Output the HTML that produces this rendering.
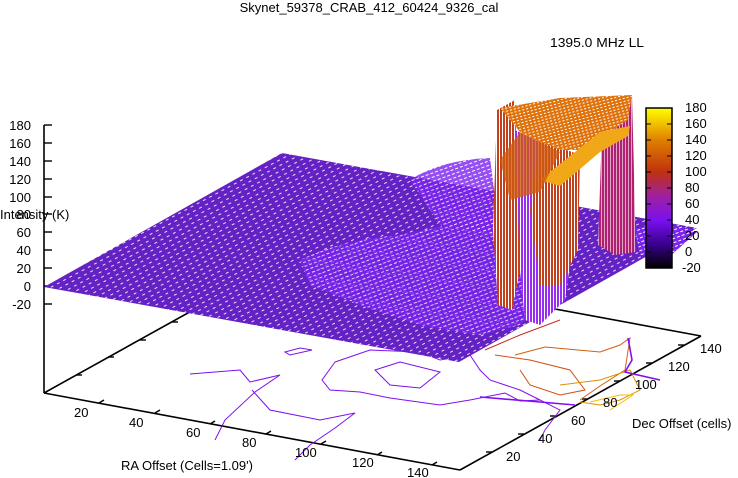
<!DOCTYPE html>
<html><head><meta charset="utf-8"><style>
html,body{margin:0;padding:0;background:#fff;width:738px;height:478px;overflow:hidden}
svg{display:block}
text{font-family:"Liberation Sans",sans-serif;font-size:13px;fill:#000}
</style></head><body>
<svg width="738" height="478" viewBox="0 0 738 478" xmlns="http://www.w3.org/2000/svg">
<defs>
<pattern id="mesh" width="7" height="5" patternUnits="userSpaceOnUse" patternTransform="rotate(-28)">
<rect width="7" height="5" fill="#6422c4"/>
<rect x="1" y="2" width="3" height="1" fill="#ffffff" opacity="0.85"/>
</pattern>
<pattern id="mesh2" width="5" height="4" patternUnits="userSpaceOnUse" patternTransform="rotate(-20)">
<rect width="5" height="4" fill="#7a22f0"/>
<rect x="0" y="2" width="3" height="1" fill="#ffffff"/>
</pattern>
<pattern id="wall" width="3" height="6" patternUnits="userSpaceOnUse">
<rect width="3" height="6" fill="#c2401c"/>
<rect x="1" y="0" width="1" height="6" fill="#fff"/>
</pattern>
<pattern id="wallP" width="3" height="6" patternUnits="userSpaceOnUse">
<rect width="3" height="6" fill="#b02070"/>
<rect x="1" y="0" width="1" height="6" fill="#fff" opacity="0.6"/>
</pattern>
<pattern id="wallV" width="3" height="6" patternUnits="userSpaceOnUse">
<rect width="3" height="6" fill="#9a2ef0"/>
<rect x="1" y="0" width="1" height="6" fill="#fff"/>
</pattern>
<pattern id="top" width="4" height="3" patternUnits="userSpaceOnUse" patternTransform="rotate(-15)">
<rect width="4" height="3" fill="#e0720c"/>
<rect x="0" y="1" width="2" height="1" fill="#fff"/>
</pattern>
<linearGradient id="cb" x1="0" y1="1" x2="0" y2="0">
<stop offset="0" stop-color="#000000"/>
<stop offset="0.15" stop-color="#3a0090"/>
<stop offset="0.3" stop-color="#7a10f0"/>
<stop offset="0.45" stop-color="#a020a0"/>
<stop offset="0.6" stop-color="#c03010"/>
<stop offset="0.8" stop-color="#e08000"/>
<stop offset="1" stop-color="#ffff00"/>
</linearGradient>
<linearGradient id="lg" x1="0" x2="1"><stop offset="0" stop-color="#7010f0"/><stop offset="0.5" stop-color="#c03010"/><stop offset="1" stop-color="#f0c000"/></linearGradient>
</defs>

<text x="369" y="12" text-anchor="middle" font-size="12">Skynet_59378_CRAB_412_60424_9326_cal</text>
<text x="644" y="47" text-anchor="end" font-size="12" textLength="94" lengthAdjust="spacingAndGlyphs">1395.0 MHz LL</text>
<line x1="653" y1="43" x2="694" y2="43" stroke="url(#lg)" stroke-width="1"/>

<g stroke="#000" stroke-width="1.6" fill="none">
<line x1="44" y1="125" x2="44" y2="393"/>
<line x1="44" y1="393" x2="460" y2="470"/>
<line x1="460" y1="470" x2="701" y2="336"/>
<line x1="701" y1="336" x2="285" y2="259"/>
<line x1="44" y1="393" x2="285" y2="259"/>
</g>
<g stroke="#000" stroke-width="1.4">
<line x1="44" y1="125" x2="52" y2="125"/><line x1="44" y1="143" x2="52" y2="143"/><line x1="44" y1="161" x2="52" y2="161"/><line x1="44" y1="179" x2="52" y2="179"/><line x1="44" y1="197" x2="52" y2="197"/><line x1="44" y1="214" x2="52" y2="214"/><line x1="44" y1="232" x2="52" y2="232"/><line x1="44" y1="250" x2="52" y2="250"/><line x1="44" y1="268" x2="52" y2="268"/><line x1="44" y1="286" x2="52" y2="286"/><line x1="44" y1="304" x2="52" y2="304"/>
<line x1="99" y1="403" x2="104" y2="400"/><line x1="155" y1="413" x2="160" y2="410"/><line x1="210" y1="424" x2="215" y2="421"/><line x1="266" y1="434" x2="271" y2="431"/><line x1="321" y1="444" x2="326" y2="441"/><line x1="377" y1="455" x2="382" y2="452"/><line x1="432" y1="465" x2="437" y2="462"/>
<line x1="492" y1="452" x2="486" y2="452"/><line x1="524" y1="434" x2="518" y2="434"/><line x1="556" y1="416" x2="550" y2="416"/><line x1="588" y1="399" x2="582" y2="399"/><line x1="620" y1="381" x2="614" y2="381"/><line x1="652" y1="363" x2="646" y2="363"/><line x1="684" y1="345" x2="678" y2="345"/>
<line x1="76" y1="375" x2="82" y2="375"/><line x1="108" y1="357" x2="114" y2="357"/><line x1="140" y1="340" x2="146" y2="340"/><line x1="172" y1="322" x2="178" y2="322"/>
</g>

<g fill="none" stroke-width="1">
<path d="M285 352 L300 348 L312 350 L290 355Z" stroke="#7a10f0"/>
<path d="M190 374 L240 370 L250 382 L280 375 L255 392 L225 420 L215 440" stroke="#7a10f0"/>
<path d="M252 390 L270 410 L320 420 L355 413 L335 428 L310 445 L295 460" stroke="#7a10f0"/>
<path d="M335 362 L370 350 L420 352 L440 360 L470 355 L480 370 L490 380 L520 390 L540 400 L520 401 L505 393 L470 400 L440 405 L390 398 L360 392 L330 390 L322 380Z" stroke="#8010f0"/>
<path d="M375 370 L400 362 L440 372 L420 388 L390 385Z" stroke="#7a10f0"/>
<path d="M536 398 L560 410 L545 430 L540 440" stroke="#8a20e0"/>
<path d="M485 350 L520 335 L560 320" stroke="#c03020"/>
<path d="M495 355 L530 360 L570 370 L585 390 L560 395 L530 385 L520 370" stroke="#d05010"/>
<path d="M515 355 L545 347 L600 352 L620 345 L630 338 L625 370 L600 386 L580 400" stroke="#d06010"/>
<path d="M560 385 L600 380 L630 370 L640 390 L620 400 L600 405 L580 402" stroke="#e09000"/>
<path d="M590 402 L620 395 L633 395 L610 410" stroke="#f0c000"/>
<path d="M628 338 L632 360 L625 372 L660 380" stroke="#8010f0" stroke-width="1.6"/>
<path d="M480 397 L540 402 L575 405" stroke="#8010f0" stroke-width="1.6"/>
</g>

<polygon points="44,287 282,153 697,228 459,362" fill="url(#mesh)"/>
<path d="M300 260 Q340 240 400 235 Q450 225 500 215 L540 260 L545 300 L520 325 L480 335 L420 325 L360 305 L310 285Z" fill="url(#mesh2)" opacity="0.75"/>
<path d="M410 180 Q440 160 490 158 L500 235 L440 225Z" fill="url(#mesh2)" opacity="0.8"/>
<polygon points="493,230 497,110 515,100 520,270 512,310 498,305" fill="url(#wall)"/>
<polygon points="520,270 515,130 575,160 572,250 565,300 540,325 525,320" fill="url(#wallV)"/>
<polygon points="530,210 540,140 580,155 578,250 560,285 540,285" fill="url(#wall)"/>
<polygon points="598,245 602,130 625,118 632,95 636,252 615,255" fill="url(#wallP)"/>
<polygon points="500,108 560,98 632,95 628,120 605,135 582,150 560,150 540,142 520,132" fill="url(#top)"/>
<polygon points="540,180 600,132 630,126 628,136 600,152 560,186" fill="#f0a818"/>
<polygon points="500,160 520,132 560,152 540,192 510,200" fill="#d05a10" opacity="0.8"/>
<polygon points="635,228 680,226 697,232 668,258 640,255" fill="url(#mesh2)"/>

<rect x="646" y="108" width="26" height="160" fill="url(#cb)" stroke="#000" stroke-width="1.5"/>
<g stroke="#000" stroke-width="1">
<line x1="646" y1="124" x2="651" y2="124"/><line x1="667" y1="124" x2="672" y2="124"/>
<line x1="646" y1="140" x2="651" y2="140"/><line x1="667" y1="140" x2="672" y2="140"/>
<line x1="646" y1="156" x2="651" y2="156"/><line x1="667" y1="156" x2="672" y2="156"/>
<line x1="646" y1="172" x2="651" y2="172"/><line x1="667" y1="172" x2="672" y2="172"/>
<line x1="646" y1="188" x2="651" y2="188"/><line x1="667" y1="188" x2="672" y2="188"/>
<line x1="646" y1="204" x2="651" y2="204"/><line x1="667" y1="204" x2="672" y2="204"/>
<line x1="646" y1="220" x2="651" y2="220"/><line x1="667" y1="220" x2="672" y2="220"/>
<line x1="646" y1="236" x2="651" y2="236"/><line x1="667" y1="236" x2="672" y2="236"/>
<line x1="646" y1="252" x2="651" y2="252"/><line x1="667" y1="252" x2="672" y2="252"/>
</g>
<g font-size="12.5">
<text x="685" y="112">180</text><text x="685" y="128">160</text><text x="685" y="144">140</text><text x="685" y="160">120</text><text x="685" y="176">100</text><text x="685" y="192">80</text><text x="685" y="208">60</text><text x="685" y="224">40</text><text x="685" y="240">20</text><text x="685" y="256">0</text><text x="682" y="272">-20</text>
</g>

<g text-anchor="end" font-size="12.5">
<text x="31" y="130">180</text><text x="31" y="148">160</text><text x="31" y="166">140</text><text x="31" y="184">120</text><text x="31" y="202">100</text><text x="31" y="219">80</text><text x="31" y="237">60</text><text x="31" y="255">40</text><text x="31" y="273">20</text><text x="31" y="291">0</text><text x="31" y="309">-20</text>
</g>
<text x="0" y="219" font-size="12.5">Intensity (K)</text>

<g font-size="12.5">
<text x="74" y="417">20</text><text x="129" y="427">40</text><text x="186" y="437">60</text><text x="242" y="447">80</text><text x="295" y="457">100</text><text x="352" y="467">120</text><text x="407" y="477">140</text>
<text x="121" y="470">RA Offset (Cells=1.09')</text>
<text x="506" y="461">20</text><text x="538" y="443">40</text><text x="571" y="425">60</text><text x="603" y="407">80</text><text x="635" y="389">100</text><text x="668" y="371">120</text><text x="700" y="353">140</text>
<text x="632" y="428">Dec Offset (cells)</text>
</g>
</svg>
</body></html>
